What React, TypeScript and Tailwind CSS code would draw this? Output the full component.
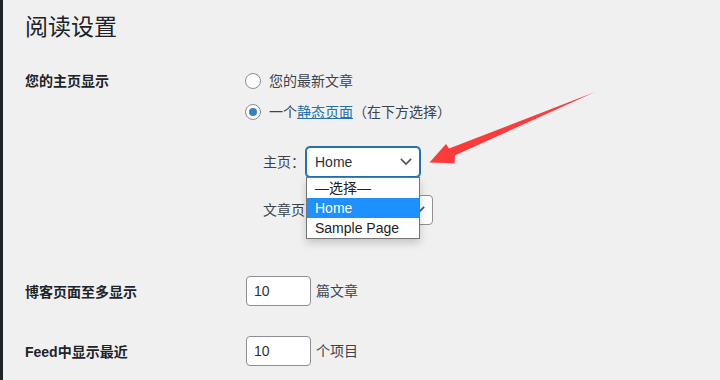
import React from "react";

function Chevron({ className }: { className?: string }) {
  return (
    <svg className={className} width="12" height="8" viewBox="0 0 12 8" fill="none">
      <path d="M1.5 1.5 L6 6 L10.5 1.5" stroke="#50575e" strokeWidth="1.7" strokeLinecap="square" />
    </svg>
  );
}

export default function App() {
  return (
    <div className="relative w-[720px] h-[380px] overflow-hidden bg-[#f0f0f1] flex text-[#1d2327] font-['Liberation_Sans','Noto_Sans_CJK_SC',sans-serif]">
      <div className="w-[3px] shrink-0 bg-[#1d2327]" />
      <div className="flex-1 pl-[22px]">
        <h1 className="mt-[12px] h-[30px] leading-[30px] text-[23px] font-normal">阅读设置</h1>

        <div className="mt-[29px] flex">
          <div className="w-[221px] shrink-0 text-[14px] leading-[20px] font-semibold">您的主页显示</div>
          <div className="flex flex-col text-[14px] text-[#3c434a]">
            <div className="flex items-center h-[20px]">
              <span className="ml-[-1px] mr-[8px] w-[16px] h-[16px] rounded-full border border-[#8c8f94] bg-white" />
              <span>您的最新文章</span>
            </div>
            <div className="mt-[11px] flex items-center h-[20px]">
              <span className="ml-[-1px] mr-[8px] w-[16px] h-[16px] rounded-full border border-[#8c8f94] bg-white flex items-center justify-center">
                <span className="w-[8px] h-[8px] rounded-full bg-[#3582c4]" />
              </span>
              <span>
                一个<span className="text-[#2271b1] underline">静态页面</span>（在下方选择）
              </span>
            </div>

            <div className="pl-[17px] mt-[25px]">
              <div className="flex items-center h-[30px]">
                <span className="w-[43px] shrink-0">主页：</span>
                <div className="relative w-[114px] h-[30px] border border-[#2271b1] shadow-[0_0_0_1px_#2271b1] rounded-[4px] bg-white pl-[8px] flex items-center text-[#2c3338]">
                  <span>Home</span>
                  <Chevron className="absolute right-[7px] top-[10px]" />
                  <div className="absolute top-[29px] left-[-1px] w-[114px] z-10 border border-[#767676] bg-white shadow-[0_4px_8px_rgba(0,0,0,0.18)] text-[#1d2327]">
                    <div className="h-[20px] leading-[20px] pl-[8px]">—选择—</div>
                    <div className="h-[20px] leading-[20px] pl-[8px] bg-[#1e90ff] text-white">Home</div>
                    <div className="h-[20px] leading-[20px] pl-[8px]">Sample Page</div>
                  </div>
                </div>
              </div>
              <div className="mt-[18px] flex items-center h-[30px]">
                <span className="w-[71px] shrink-0">文章页</span>
                <div className="relative w-[99px] h-[30px] border border-[#8c8f94] rounded-[4px] bg-white">
                  <Chevron className="absolute right-[7px] top-[10px]" />
                </div>
              </div>
            </div>
          </div>
        </div>

        <div className="mt-[51px] flex items-center h-[30px]">
          <div className="w-[221px] shrink-0 text-[14px] font-semibold pt-[2px]">博客页面至多显示</div>
          <div className="w-[65px] h-[30px] border border-[#8c8f94] rounded-[4px] bg-white pl-[7px] flex items-center text-[14px] text-[#2c3338]">10</div>
          <span className="ml-[5px] text-[14px] text-[#3c434a]">篇文章</span>
        </div>

        <div className="mt-[30px] flex items-center h-[30px]">
          <div className="w-[221px] shrink-0 text-[14px] font-semibold pt-[2px]">Feed中显示最近</div>
          <div className="w-[65px] h-[30px] border border-[#8c8f94] rounded-[4px] bg-white pl-[7px] flex items-center text-[14px] text-[#2c3338]">10</div>
          <span className="ml-[5px] text-[14px] text-[#3c434a]">个项目</span>
        </div>
      </div>

      <svg className="absolute left-0 top-0 pointer-events-none z-20" width="720" height="380" viewBox="0 0 720 380">
        <polygon
          points="595,92 449,148.5 446,144 429.5,162.5 454.5,163.3 455,155.3"
          fill="#fe3a3a"
        />
      </svg>
    </div>
  );
}
